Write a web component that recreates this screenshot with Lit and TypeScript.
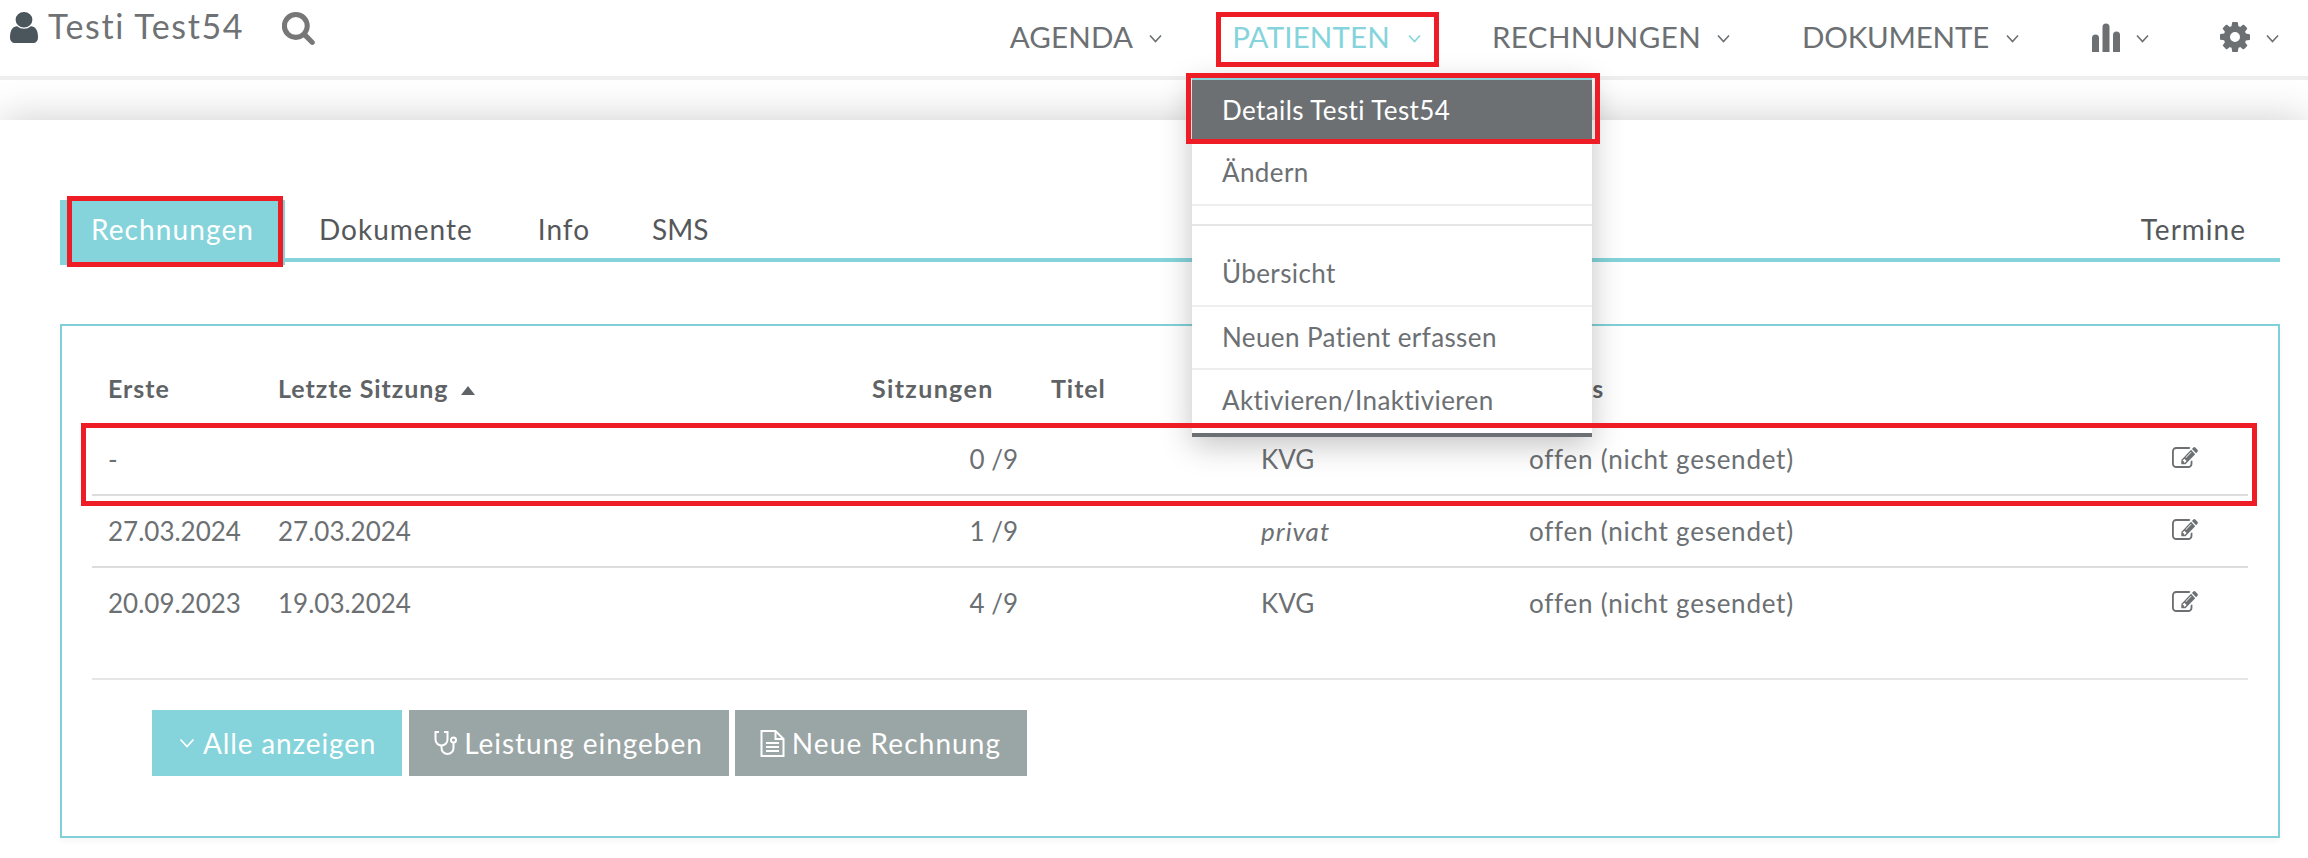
import { LitElement, html, css, svg } from "lit";
import { customElement } from "lit/decorators.js";

const chevron = svg`<svg class="chev" viewBox="0 0 13 9"><path d="M1 1.5 6.5 7.5 12 1.5" fill="none" stroke="currentColor" stroke-width="1.6"/></svg>`;
const editIcon = html`<svg class="edit" viewBox="0 128 1792 1408" preserveAspectRatio="none"><path fill="#6c7073" d="M888 1184l116-116-152-152-116 116v56h96v96h56zm440-720q-16-16-33 1l-350 350q-17 17-1 33t33-1l350-350q17-17 1-33zm80 594v190q0 119-84.5 203.5t-203.5 84.5h-832q-119 0-203.5-84.5t-84.5-203.5v-832q0-119 84.5-203.5t203.5-84.5h832q63 0 117 25 15 7 18 23 3 17-9 29l-49 49q-14 14-32 8-23-6-45-6h-832q-66 0-113 47t-47 113v832q0 66 47 113t113 47h832q66 0 113-47t47-113v-126q0-13 9-22l64-64q15-15 35-7t20 29zm-96-738l288 288-672 672h-288v-288zm444 132l-92 92-288-288 92-92q28-28 68-28t68 28l152 152q28 28 28 68t-28 68z"/></svg>`;

const rows = [
  { first: "-", last: "", count: "0 /9", type: "KVG", status: "offen (nicht gesendet)", italic: false },
  { first: "27.03.2024", last: "27.03.2024", count: "1 /9", type: "privat", status: "offen (nicht gesendet)", italic: true },
  { first: "20.09.2023", last: "19.03.2024", count: "4 /9", type: "KVG", status: "offen (nicht gesendet)", italic: false },
];

@customElement("app-root")
export class AppRoot extends LitElement {
  static styles = css`
    :host { display: block; position: relative; width: 2308px; height: 858px; overflow: hidden; background: #fff; font-family: "Lato", "Liberation Sans", sans-serif; color: #6c7073; font-size: 26px; }
    * { box-sizing: border-box; }
    header { position: relative; z-index: 1; height: 80px; background: #fff; border-bottom: 4px solid #eee; display: flex; justify-content: space-between; align-items: flex-start; }
    .brand { display: flex; align-items: center; padding: 7px 0 0 10px; height: 44px; }
    .brand .user { width: 28px; height: 31px; margin-top: 4px; }
    .brand .name { margin-left: 10px; font-size: 34px; letter-spacing: 1.6px; color: #6f7275; }
    .brand .search { width: 34px; height: 33px; margin-left: 38px; margin-top: 5px; }
    nav { display: flex; padding: 21px 29px 0 0; align-items: center; box-sizing: content-box; height: 32px; }
    .nav-item { display: flex; align-items: center; gap: 18px; font-size: 29.5px; color: #6c7073; line-height: 32px; margin-left: 73px; letter-spacing: .15px; }
    .nav-item.agenda { gap: 16px; letter-spacing: .2px; margin-left: 0; }
    .nav-item.active { color: #85d4db; margin-left: 70px; }
    .nav-item.rech { letter-spacing: .4px; gap: 16px; margin-left: 71px; }
    .nav-item.doku { letter-spacing: -.2px; gap: 17px; margin-left: 72px; }
    .nav-item.stat { gap: 16px; margin-left: 73px; }
    .nav-item.conf { gap: 16px; margin-left: 71px; }
    .chev { width: 13px; height: 9px; margin-top: 3px; display: block; }
    .bars { width: 28px; height: 29px; }
    .gear { width: 30px; height: 30px; }
    .band { height: 40px; background: #fff; }
    main { background: #fff; padding: 80px 28px 0 60px; height: 738px; box-shadow: 0 0 40px rgba(0,0,0,.2); }
    .tabs { display: flex; align-items: stretch; height: 62px; border-bottom: 4px solid #85d4db; }
    .tab { padding: 0 32.5px; display: flex; align-items: center; height: 58px; color: #55585a; font-size: 28px; letter-spacing: 1px; }
    .tab.active { background: #85d4db; color: #fff; width: 225px; margin-right: 1.5px; padding: 0 0 7px 31px; height: 65px; letter-spacing: 1.1px; }
    .tab.sms { letter-spacing: 0; margin-left: -3px; }
    .tab.right { margin-left: auto; padding-right: 34px; }
    .panel { margin-top: 62px; height: 514px; border: 2px solid #7fd0d8; padding: 0 30px; box-shadow: 0 3px 6px rgba(0,0,0,.04); }
    .row { display: grid; grid-template-columns: 170px 594px 146px 243px 268px 643px 1fr; padding-left: 16px; height: 72px; align-items: start; padding-top: 19px; line-height: 32px; border-bottom: 2px solid #ddd; }
    .row.head { height: 98px; padding-top: 46px; font-weight: 700; border-bottom: 0; color: #5f6366; font-size: 25px; letter-spacing: .95px; }
    .row.plain { border-bottom: 0; }
    .num { text-align: right; }
    .head .num { text-align: left; letter-spacing: 1.35px; }
    .titel { padding-left: 33px; }
    .spaced { letter-spacing: .75px; }
    .sort { display: inline-block; width: 0; height: 0; margin-left: 13px; vertical-align: 3px; border-left: 7.5px solid transparent; border-right: 7.5px solid transparent; border-bottom: 9px solid #5f6366; }
    .edit { display: block; width: 26px; height: 21px; margin-top: 4px; }
    i { font-style: italic; letter-spacing: 1px; }
    .foot { margin-top: 38px; border-top: 2px solid #e6e6e6; padding: 30px 0 0 60px; display: flex; gap: 7px; }
    .btn { height: 66px; display: flex; align-items: center; gap: 6px; padding: 0 26px 0 25px; color: #fff; background: #9aa5a5; font-size: 28px; letter-spacing: .95px; }
    .btn.new { gap: 7px; letter-spacing: 1.1px; margin-left: -1px; }
    .btn.primary { background: #85d4db; padding: 0 26px 0 27px; gap: 8px; letter-spacing: .85px; }
    .btn svg { display: block; }
    .menu { position: absolute; z-index: 2; left: 1192px; top: 78px; width: 400px; height: 359px; background: #fff; border-top: 2px solid #85d4db; border-bottom: 4px solid #6c7073; box-shadow: 0 8px 30px rgba(0,0,0,.24); font-size: 26px; letter-spacing: .4px; color: #6c7073; }
    .mi { display: flex; align-items: center; padding-left: 30px; border-bottom: 2px solid #eee; }
    .mi.dark { background: #6c7073; color: #fff; height: 59px; border: 0; }
    .mi.a { height: 67px; }
    .mi.gap { height: 20px; border-bottom-color: #e6e6e6; }
    .mi.b { height: 81px; padding-top: 14px; }
    .mi.c { height: 63px; padding-bottom: 2px; }
    .mi.d { height: 61px; border-bottom: 0; padding-bottom: 2px; }
    .red { position: absolute; z-index: 3; border: 5px solid #ee1c25; pointer-events: none; }
    .red.nav { left: 1216px; top: 12px; width: 223px; height: 55px; }
    .red.item { left: 1186px; top: 73px; width: 414px; height: 71px; }
    .red.tabmark { left: 67px; top: 196px; width: 216px; height: 71px; }
    .red.rowmark { left: 81px; top: 423px; width: 2176px; height: 83px; }
  `;

  render() {
    return html`
      <header>
        <div class="brand">
          <svg class="user" viewBox="256 128 1280 1536" preserveAspectRatio="none"><path fill="#4a555c" d="M1536 1399q0 109-62.5 187t-150.5 78h-854q-88 0-150.5-78t-62.5-187q0-85 8.5-160.5t31.5-151.5 58.5-130 94-88.5 134.5-34.5q131 128 313 128t313-128q76 0 134.5 34.5t94 88.5 58.5 130 31.5 151.5 8.5 160.5zm-256-887q0 159-112.5 271.5t-271.5 112.5-271.5-112.5-112.5-271.5 112.5-271.5 271.5-112.5 271.5 112.5 112.5 271.5z"/></svg>
          <span class="name">Testi Test54</span>
          <svg class="search" viewBox="128 128 1600 1664"><path fill="#777" d="M1216 832q0-185-131.5-316.5t-316.5-131.5-316.5 131.5-131.5 316.5 131.5 316.5 316.5 131.5 316.5-131.5 131.5-316.5zm512 832q0 52-38 90t-90 38q-54 0-90-38l-343-342q-179 124-399 124-143 0-273.5-55.5t-225-150-150-225-55.5-273.5 55.5-273.5 150-225 225-150 273.5-55.5 273.5 55.5 225 150 150 225 55.5 273.5q0 220-124 399l343 343q37 37 37 90z"/></svg>
        </div>
        <nav>
          <div class="nav-item agenda">AGENDA ${chevron}</div>
          <div class="nav-item active">PATIENTEN ${chevron}</div>
          <div class="nav-item rech">RECHNUNGEN ${chevron}</div>
          <div class="nav-item doku">DOKUMENTE ${chevron}</div>
          <div class="nav-item stat">
            <svg class="bars" viewBox="0 0 28 29"><g fill="#6c7073"><path d="M0 29V15a3.5 3.5 0 0 1 7 0v14z"/><path d="M10.500 29V4a3.500 3.500 0 0 1 7 0v25z"/><path d="M21 29V12a3.500 3.500 0 0 1 7 0v17z"/></g></svg>
            ${chevron}
          </div>
          <div class="nav-item conf">
            <svg class="gear" viewBox="128 128 1536 1536"><path fill="#6c7073" d="M1152 896q0-106-75-181t-181-75-181 75-75 181 75 181 181 75 181-75 75-181zm512-109v222q0 12-8 23t-20 13l-185 28q-19 54-39 91 35 50 107 138 10 12 10 25t-9 23q-27 37-99 108t-94 71q-12 0-26-9l-138-108q-44 23-91 38-16 136-29 186-7 28-36 28h-222q-14 0-24.5-8.5t-11.5-21.5l-28-184q-49-16-90-37l-141 107q-10 9-25 9-14 0-25-11-126-114-165-168-7-10-7-23 0-12 8-23 15-21 51-66.5t54-70.500q-27-50-41-99l-183-27q-13-2-21-12.500t-8-23.500v-222q0-12 8-23t19-13l186-28q14-46 39-92-40-57-107-138-10-12-10-24 0-10 9-23 26-36 98.500-107.500t94.500-71.500q13 0 26 10l138 107q44-23 91-38 16-136 29-186 7-28 36-28h222q14 0 24.500 8.500t11.500 21.500l28 184q49 16 90 37l142-107q9-9 24-9 13 0 25 10 129 119 165 170 7 8 7 22 0 12-8 23-15 21-51 66.500t-54 70.500q26 50 41 98l183 28q13 2 21 12.500t8 23.500z"/></svg>
            ${chevron}
          </div>
        </nav>
      </header>
      <div class="band"></div>
      <main>
        <div class="tabs">
          <div class="tab active">Rechnungen</div>
          <div class="tab">Dokumente</div>
          <div class="tab">Info</div>
          <div class="tab sms">SMS</div>
          <div class="tab right">Termine</div>
        </div>
        <div class="panel">
          <div class="row head">
            <span>Erste</span>
            <span>Letzte Sitzung<span class="sort"></span></span>
            <span class="num">Sitzungen</span>
            <span class="titel">Titel</span>
            <span></span>
            <span>Status</span>
            <span></span>
          </div>
          ${rows.map((r, i) => html`
            <div class="row ${i === 2 ? "plain" : ""}">
              <span>${r.first}</span>
              <span>${r.last}</span>
              <span class="num">${r.count}</span>
              <span></span>
              <span>${r.italic ? html`<i>${r.type}</i>` : r.type}</span>
              <span class="spaced">${r.status}</span>
              ${editIcon}
            </div>`)}
          <div class="foot">
            <div class="btn primary">${svg`<svg width="16" height="10" viewBox="0 0 16 10"><path d="M1.500 1.500 8 8.500 14.500 1.500" fill="none" stroke="#fff" stroke-width="1.800"/></svg>`}Alle anzeigen</div>
            <div class="btn">
              <svg width="24" height="24" viewBox="0 0 24 24" fill="none" stroke="#fff" stroke-width="2"><path d="M5 1H1.500v7.500a6 6 0 0 0 12 0V1H10"/><path d="M7.500 14.500V17a6 6 0 0 0 12 0v-5"/><circle cx="19.500" cy="9" r="2.500"/></svg>
              Leistung eingeben
            </div>
            <div class="btn new">
              <svg width="25" height="27" viewBox="0 0 25 27" fill="none" stroke="#fff" stroke-width="2"><path d="M1.500 1h14l8 8v17h-22z"/><path d="M15.500 1v8h8"/><path d="M6 13h13M6 17h13M6 21h13"/></svg>
              Neue Rechnung
            </div>
          </div>
        </div>
      </main>
      <div class="menu">
        <div class="mi dark">Details Testi Test54</div>
        <div class="mi a">Ändern</div>
        <div class="mi gap"></div>
        <div class="mi b">Übersicht</div>
        <div class="mi c">Neuen Patient erfassen</div>
        <div class="mi d">Aktivieren/Inaktivieren</div>
      </div>
      <div class="red nav"></div>
      <div class="red item"></div>
      <div class="red tabmark"></div>
      <div class="red rowmark"></div>
    `;
  }
}
